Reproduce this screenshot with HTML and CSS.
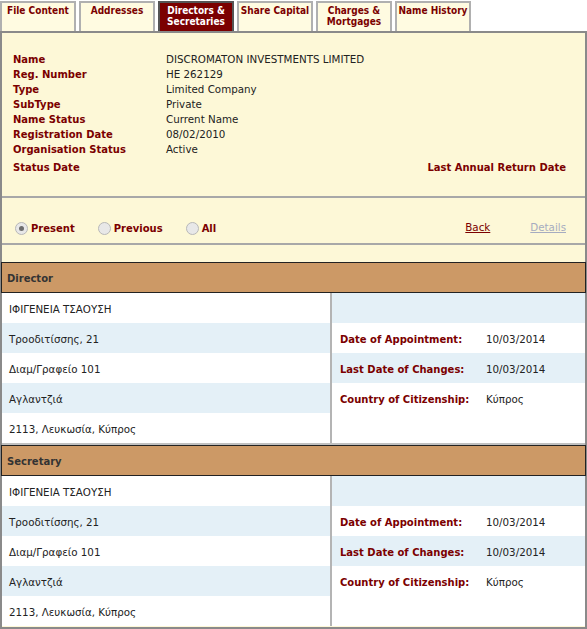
FILE: index.html
```html
<!DOCTYPE html>
<html>
<head lang="en">
    <meta charset="UTF-8">
    <title>Organisation Details - Directors &amp; Secretaries</title>
    <link rel="stylesheet" href="styles.css">
</head>
<body>
<div class="page">
    <ul class="tabs">
        <li><a href="#">File Content</a></li>
        <li><a href="#">Addresses</a></li>
        <li class="current"><a href="#">Directors &amp;<br>Secretaries</a></li>
        <li><a href="#">Share Capital</a></li>
        <li><a href="#">Charges &amp;<br>Mortgages</a></li>
        <li><a href="#">Name History</a></li>
    </ul>

    <div class="panel">
        <div class="info">
            <div class="info-row"><span class="lbl">Name</span><span>DISCROMATON INVESTMENTS LIMITED</span></div>
            <div class="info-row"><span class="lbl">Reg. Number</span><span>HE 262129</span></div>
            <div class="info-row"><span class="lbl">Type</span><span>Limited Company</span></div>
            <div class="info-row"><span class="lbl">SubType</span><span>Private</span></div>
            <div class="info-row"><span class="lbl">Name Status</span><span>Current Name</span></div>
            <div class="info-row"><span class="lbl">Registration Date</span><span>08/02/2010</span></div>
            <div class="info-row"><span class="lbl">Organisation Status</span><span>Active</span></div>
            <div class="info-row status"><span class="lbl">Status Date</span><span></span><span class="lbl right">Last Annual Return Date</span></div>
        </div>

        <div class="filter">
            <label class="radio checked"><span class="dot"></span>Present</label>
            <label class="radio"><span class="dot"></span>Previous</label>
            <label class="radio"><span class="dot"></span>All</label>
            <span class="links">
                <a href="#" class="back">Back</a>
                <a href="#" class="disabled">Details</a>
            </span>
        </div>

        <div class="person">
            <div class="person-head">Director</div>
            <div class="person-body">
                <div class="col left">
                    <div class="cell">ΙΦΙΓΕΝΕΙΑ ΤΣΑΟΥΣΗ</div>
                    <div class="cell alt">Τροοδιτίσσης, 21</div>
                    <div class="cell">Διαμ/Γραφείο 101</div>
                    <div class="cell alt">Αγλαντζιά</div>
                    <div class="cell">2113, Λευκωσία, Κύπρος</div>
                </div>
                <div class="col right">
                    <div class="cell alt"></div>
                    <div class="cell"><span class="lbl">Date of Appointment:</span>10/03/2014</div>
                    <div class="cell alt"><span class="lbl">Last Date of Changes:</span>10/03/2014</div>
                    <div class="cell"><span class="lbl">Country of Citizenship:</span>Κύπρος</div>
                    <div class="cell"></div>
                </div>
            </div>
        </div>

        <div class="person">
            <div class="person-head">Secretary</div>
            <div class="person-body">
                <div class="col left">
                    <div class="cell">ΙΦΙΓΕΝΕΙΑ ΤΣΑΟΥΣΗ</div>
                    <div class="cell alt">Τροοδιτίσσης, 21</div>
                    <div class="cell">Διαμ/Γραφείο 101</div>
                    <div class="cell alt">Αγλαντζιά</div>
                    <div class="cell">2113, Λευκωσία, Κύπρος</div>
                </div>
                <div class="col right">
                    <div class="cell alt"></div>
                    <div class="cell"><span class="lbl">Date of Appointment:</span>10/03/2014</div>
                    <div class="cell alt"><span class="lbl">Last Date of Changes:</span>10/03/2014</div>
                    <div class="cell"><span class="lbl">Country of Citizenship:</span>Κύπρος</div>
                    <div class="cell"></div>
                </div>
            </div>
        </div>
    </div>
</div>
</body>
</html>
```

FILE: styles.css
```css
*{margin: 0; padding: 0; box-sizing: border-box;}
ul,ol{list-style:none;}
body {
    font-family: "DejaVu Sans", Verdana, sans-serif;
    font-size: 10.3px;
    color: #222;
    background: #fff;
}
.page {
    width: 587px;
}

/* tabs */
.tabs {
    display: flex;
    gap: 3px;
    padding-top: 1px;
}
.tabs li {
    width: 76px;
    height: 30px;
    border: 2px solid #b0b0b0;
    border-bottom: none;
    background-color: #fffbe1;
    display: flex;
    justify-content: center;
    text-align: center;
    padding-top: 2px;
    line-height: 11px;
}
.tabs li a {
    font-family: "DejaVu Sans Condensed", "DejaVu Sans", sans-serif;
    font-stretch: condensed;
    color: #7b0000;
    font-weight: bold;
    font-size: 10px;
    text-decoration: none;
}
.tabs li.current {
    background-color: #7b0000;
    border-color: #555;
}
.tabs li.current a {
    color: #fff;
}

/* main panel */
.panel {
    background-color: #fdf8d7;
    border: 2px solid #8a8a8a;
    height: 598px;
}

.info {
    padding: 19px 19px 0 11px;
    height: 165px;
    border-bottom: 2px solid #a8a8a8;
}
.info-row {
    display: flex;
    height: 15px;
    line-height: 15px;
}
.info-row span:first-child {
    width: 153px;
}
.info-row.status {
    margin-top: 3px;
}
.info-row .right {
    margin-left: auto;
}
.lbl {
    color: #7b0000;
    font-weight: bold;
    font-size: 10px;
}

/* present / previous / all */
.filter {
    display: flex;
    align-items: center;
    height: 47px;
    padding: 15px 19px 0 13px;
    border-bottom: 2px solid #a8a8a8;
}
.radio {
    display: flex;
    align-items: center;
    color: #7b0000;
    font-weight: bold;
    font-size: 10px;
    margin-right: 23px;
}
.radio .dot {
    width: 13px;
    height: 13px;
    border-radius: 50%;
    border: 1px solid #b8b8b8;
    background-color: #e8e8e8;
    margin-right: 3px;
    position: relative;
}
.radio.checked .dot::after {
    content: "";
    position: absolute;
    left: 3px;
    top: 3px;
    width: 5px;
    height: 5px;
    border-radius: 50%;
    background-color: #6d6d6d;
}
.links {
    margin-left: auto;
    display: flex;
    gap: 40px;
    margin-top: -3px;
}
.links a {
    color: #7b0000;
}
.links a.disabled {
    color: #a6acc0;
}

/* director / secretary blocks */
.person {
    margin-top: 17px;
}
.person + .person {
    margin-top: 0;
    border-top: 2px solid #c0c0c0;
}
.person-head {
    height: 31px;
    line-height: 27px;
    padding-top: 2px;
    background-color: #cc9966;
    border: 1px solid #222;
    margin: 0 -1px;
    padding-left: 5px;
    font-weight: bold;
    font-size: 10px;
    color: #333;
}
.person-body {
    display: flex;
    background: #fff;
}
.col.left {
    width: 330px;
    border-right: 2px solid #b4b4b4;
}
.col.right {
    flex: 1;
}
.cell {
    height: 30px;
    line-height: 28px;
    padding-top: 2px;
    padding-left: 7px;
}
.col.right .cell {
    padding-left: 8px;
}
.cell.alt {
    background-color: #e4f0f7;
}
.cell .lbl {
    display: inline-block;
    width: 146px;
}
```
